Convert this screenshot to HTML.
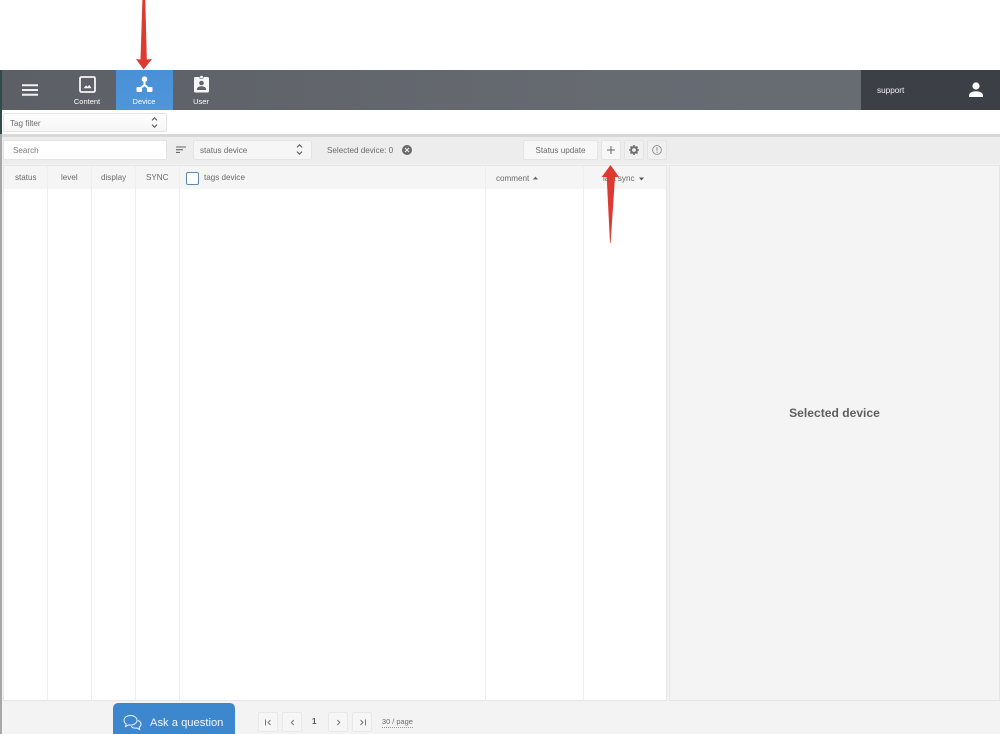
<!DOCTYPE html>
<html>
<head>
<meta charset="utf-8">
<style>
html,body{margin:0;padding:0;background:#fff;}
#p{position:relative;width:1000px;height:734px;overflow:hidden;background:#fff;font-family:"Liberation Sans",sans-serif;color:#6a6a6a;font-size:8.1px;filter:blur(.35px);}
#p div,#p span{position:absolute;white-space:nowrap;box-sizing:border-box;}
.box{background:#fbfbfb;border:1px solid #e4e4e4;border-radius:2px;}
.t{line-height:12px;}
.col{top:166px;height:535px;width:1px;background:#eeeeee;}
.nl{color:#fff;font-size:7.500px;line-height:10px;text-align:center;}
.pg{top:712px;width:20px;height:20px;background:#f7f6f6;border:1px solid #e8e8e8;border-radius:2px;}
.pg svg{position:absolute;left:5px;top:5px;}
</style>
</head>
<body>
<div id="p">
<div style="left:0;top:70px;width:1000px;height:40px;background:linear-gradient(90deg,#5c5f66,#666a71 60%,#686c73);"></div>
<div style="left:0;top:110px;width:2px;height:624px;background:#a4a8a8;"></div>
<div style="left:0;top:70px;width:2px;height:64px;background:#2f4a4c;"></div>
<div style="left:116px;top:70px;width:57px;height:40px;background:linear-gradient(#4a90d6,#4f95da);"></div>
<div style="left:861px;top:70px;width:139px;height:40px;background:#3c3f46;"></div>

<svg style="position:absolute;left:22px;top:84px" width="16" height="12"><path d="M0 1.200H16M0 6H16M0 10.800H16" stroke="#f2f2f2" stroke-width="2"/></svg>
<svg style="position:absolute;left:79px;top:76px" width="17" height="17" viewBox="0 0 17 17"><rect x="1" y="1" width="15" height="15" rx="1.500" fill="none" stroke="#f5f5f5" stroke-width="1.800"/><path d="M4.500 12.200l2.500-2.800 1.500 1.500 1.800-2 2.200 3.300z" fill="#f5f5f5"/></svg>
<svg style="position:absolute;left:136px;top:76px" width="17" height="17" viewBox="0 0 17 17"><circle cx="8.500" cy="3.200" r="2.800" fill="#fff"/><rect x="0.500" y="11" width="5.500" height="5" rx="1" fill="#fff"/><rect x="11" y="11" width="5.500" height="5" rx="1" fill="#fff"/><path d="M8.500 4.500V9L3.500 13M8.500 9L13.500 13" stroke="#fff" stroke-width="2" fill="none"/></svg>
<svg style="position:absolute;left:193px;top:75px" width="17" height="18" viewBox="0 0 17 18"><rect x="1" y="2" width="15" height="15.500" rx="1.600" fill="#f7f7f7"/><rect x="6.800" y="0.600" width="3.400" height="3" rx="1" fill="#f7f7f7" stroke="#666a71" stroke-width=".6"/><circle cx="8.500" cy="8" r="2.300" fill="#60636a"/><path d="M3.800 15c0-2.800 2-3.800 4.700-3.800s4.700 1 4.700 3.800z" fill="#60636a"/></svg>
<div class="t nl" style="left:67px;top:97px;width:40px;">Content</div>
<div class="t nl" style="left:124px;top:97px;width:40px;">Device</div>
<div class="t nl" style="left:181px;top:97px;width:40px;">User</div>
<div class="t" style="left:877px;top:85px;color:#f2f2f2;font-size:8.200px;">support</div>
<svg style="position:absolute;left:968px;top:82px" width="16" height="16" viewBox="0 0 16 16"><circle cx="8" cy="4" r="3.600" fill="#fff"/><path d="M1 15v-1.600C1 10.600 4.500 9.200 8 9.200s7 1.400 7 4.200V15z" fill="#fff"/></svg>

<div class="box" style="left:3px;top:113px;width:164px;height:19px;background:linear-gradient(#fdfdfd,#f6f6f6);"></div>
<div class="t" style="left:10px;top:118px;">Tag filter</div>
<svg style="position:absolute;left:151px;top:116px" width="7" height="13" viewBox="0 0 7 13"><path d="M1 4.400L3.500 1.800 6 4.400M1 8.600L3.500 11.200 6 8.600" fill="none" stroke="#555" stroke-width="1.100"/></svg>

<div style="left:2px;top:134px;width:998px;height:3px;background:#d8d8d8;"></div>
<div style="left:2px;top:137px;width:998px;height:27px;background:#ededed;"></div>
<div style="left:2px;top:164px;width:998px;height:570px;background:#f4f3f3;"></div>

<div class="box" style="left:3px;top:140px;width:164px;height:20px;background:#fff;"></div>
<div class="t" style="left:13px;top:145px;color:#7a7a7a;">Search</div>
<svg style="position:absolute;left:176px;top:146px" width="10" height="8"><path d="M0 1H10M0 3.700H7M0 6.400H4" stroke="#666" stroke-width="1.100"/></svg>
<div class="box" style="left:193px;top:140px;width:119px;height:20px;background:#f6f6f6;"></div>
<div class="t" style="left:200px;top:145px;">status device</div>
<svg style="position:absolute;left:296px;top:143px" width="7" height="13" viewBox="0 0 7 13"><path d="M1 4.400L3.500 1.800 6 4.400M1 8.600L3.500 11.200 6 8.600" fill="none" stroke="#555" stroke-width="1.100"/></svg>
<div class="t" style="left:327px;top:145px;">Selected device: 0</div>
<svg style="position:absolute;left:402px;top:145px" width="10" height="10" viewBox="0 0 10 10"><circle cx="5" cy="5" r="5" fill="#6a6a6a"/><path d="M3 3L7 7M7 3L3 7" stroke="#eee" stroke-width="1.200"/></svg>

<div class="box" style="left:523px;top:140px;width:75px;height:20px;background:#f7f7f7;"></div>
<div class="t" style="left:523px;top:145px;width:75px;text-align:center;">Status update</div>
<div class="box" style="left:601px;top:140px;width:20px;height:20px;background:#f7f7f7;"></div>
<svg style="position:absolute;left:607px;top:146px" width="8" height="8"><path d="M4 0V8M0 4H8" stroke="#666" stroke-width="1"/></svg>
<div class="box" style="left:624px;top:140px;width:20px;height:20px;background:#f0f0f0;"></div>
<svg style="position:absolute;left:629px;top:145px" width="10" height="10" viewBox="0 0 10 10"><circle cx="5" cy="5" r="2.900" fill="none" stroke="#6e6e6e" stroke-width="2"/><path d="M5 0V2M5 8V10M0 5H2M8 5H10M1.500 1.500L3 3M7 7L8.500 8.500M8.500 1.500L7 3M3 7L1.500 8.500" stroke="#6e6e6e" stroke-width="1.600"/></svg>
<div class="box" style="left:647px;top:140px;width:20px;height:20px;background:#f0f0f0;"></div>
<svg style="position:absolute;left:652px;top:145px" width="10" height="10" viewBox="0 0 10 10"><circle cx="5" cy="5" r="4.400" fill="none" stroke="#8a8a8a" stroke-width=".9"/><path d="M5 2.300V5.700M5 6.700V7.700" stroke="#8a8a8a" stroke-width="1"/></svg>

<div style="left:3px;top:165px;width:664px;height:536px;background:#fff;border:1px solid #e6e6e6;"></div>
<div style="left:4px;top:166px;width:662px;height:23px;background:#f6f5f5;"></div>
<div class="col" style="left:47px"></div>
<div class="col" style="left:91px"></div>
<div class="col" style="left:135px"></div>
<div class="col" style="left:179px"></div>
<div class="col" style="left:485px"></div>
<div class="col" style="left:583px"></div>
<div class="t" style="left:15px;top:172px;">status</div>
<div class="t" style="left:61px;top:172px;">level</div>
<div class="t" style="left:101px;top:172px;">display</div>
<div class="t" style="left:146px;top:172px;">SYNC</div>
<div style="left:186px;top:172px;width:13px;height:13px;background:#fff;border:1px solid #5b88b0;border-radius:2px;"></div>
<div class="t" style="left:204px;top:172px;">tags device</div>
<div class="t" style="left:496px;top:173px;">comment</div>
<svg style="position:absolute;left:533px;top:176px" width="5" height="4"><path d="M0 3.500L2.500 .5 5 3.500z" fill="#666"/></svg>
<div class="t" style="left:603px;top:173px;">last sync</div>
<svg style="position:absolute;left:639px;top:177px" width="5" height="4"><path d="M0 .5L2.500 3.500 5 .5z" fill="#555"/></svg>

<div style="left:669px;top:165px;width:331px;height:536px;background:#f5f4f4;border:1px solid #e6e6e6;"></div>
<div style="left:669px;top:406px;width:331px;text-align:center;font-size:12.100px;font-weight:bold;line-height:15px;color:#5f5f5f;">Selected device</div>

<div style="left:113px;top:703px;width:122px;height:31px;background:#3d87cf;border-radius:5px 5px 0 0;"></div>
<svg style="position:absolute;left:123px;top:714px" width="19" height="17" viewBox="0 0 19 17"><path d="M7.500 1.500C3.800 1.500 1 3.600 1 6.300c0 1.500.9 2.800 2.200 3.700L2.500 12.500l3.200-1.600c.6.100 1.200.2 1.800.2 3.700 0 6.500-2.100 6.500-4.800S11.200 1.500 7.500 1.500z" fill="none" stroke="#e8f1fa" stroke-width="1"/><path d="M15 6.500c1.800.8 3 2.100 3 3.700 0 1.200-.7 2.300-1.800 3l.5 2.300-2.800-1.500c-2.100.4-4.500-.3-5.700-1.800" fill="none" stroke="#e8f1fa" stroke-width="1"/></svg>
<div class="t" style="left:150px;top:716px;color:#f2f7fc;font-size:11.200px;line-height:14px;">Ask a question</div>

<div class="pg" style="left:258px;"><svg width="9" height="9" viewBox="0 0 9 9"><path d="M1.500 1.500V7.500M6.500 2L4 4.500 6.500 7" fill="none" stroke="#777" stroke-width="1"/></svg></div>
<div class="pg" style="left:282px;"><svg width="9" height="9" viewBox="0 0 9 9"><path d="M5.800 2L3.300 4.500 5.800 7" fill="none" stroke="#777" stroke-width="1"/></svg></div>
<div class="t" style="left:312px;top:716px;font-weight:bold;color:#555;font-size:8px;">1</div>
<div class="pg" style="left:328px;"><svg width="9" height="9" viewBox="0 0 9 9"><path d="M3.300 2L5.800 4.500 3.300 7" fill="none" stroke="#777" stroke-width="1"/></svg></div>
<div class="pg" style="left:352px;"><svg width="9" height="9" viewBox="0 0 9 9"><path d="M2.500 2L5 4.500 2.500 7M7.500 1.500V7.500" fill="none" stroke="#777" stroke-width="1"/></svg></div>
<div class="t" style="left:382px;top:716px;color:#6a6a6a;font-size:7.400px;border-bottom:1px dotted #999;line-height:11px;">30 / page</div>

<svg style="position:absolute;left:130px;top:0" width="26" height="72" viewBox="0 0 26 72"><path d="M12.400 0H15.300L16.800 59.500 22 59 13.600 69.500 6 59 10.500 59.500z" fill="#dd3a31"/></svg>
<svg style="position:absolute;left:598px;top:164px" width="26" height="82" viewBox="0 0 26 82"><path d="M12.500 1L21 13 17 13 12.600 79 12 79 8.700 13 3.700 13z" fill="#dd3a31"/></svg>
</div>
</body>
</html>
